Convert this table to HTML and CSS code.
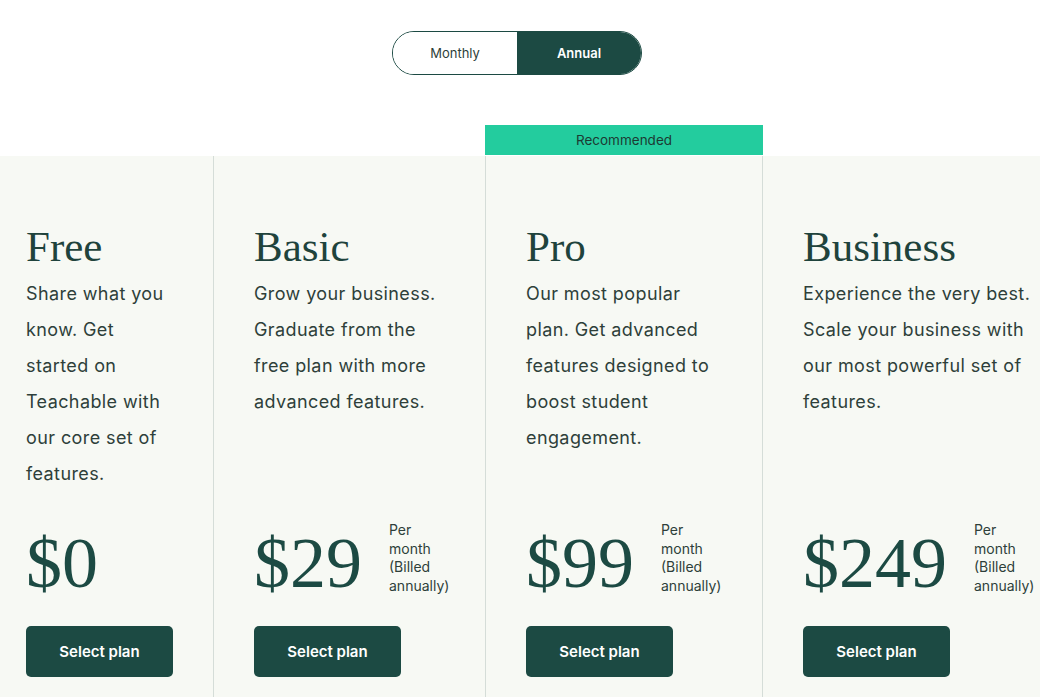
FILE: index.html
```html
<html lang="en">

<head>
    <title>Pricing</title>
    <link rel="stylesheet" href="styles.css">
</head>

<body>
    <div class="toggle">
        <button class="opt">Monthly</button>
        <button class="opt active">Annual</button>
    </div>

    <div class="plans">
        <div class="plan">
            <h2>Free</h2>
            <p class="desc">Share what you know. Get started on Teachable with our core set of features.</p>
            <div class="price">
                <span class="amount">$0</span>
            </div>
            <button class="select">Select plan</button>
        </div>
        <div class="plan">
            <h2>Basic</h2>
            <p class="desc">Grow your business. Graduate from the free plan with more advanced features.</p>
            <div class="price">
                <span class="amount">$29</span>
                <span class="per">Per month (Billed annually)</span>
            </div>
            <button class="select">Select plan</button>
        </div>
        <div class="plan featured">
            <div class="badge">Recommended</div>
            <h2>Pro</h2>
            <p class="desc">Our most popular plan. Get advanced features designed to boost student engagement.</p>
            <div class="price">
                <span class="amount">$99</span>
                <span class="per">Per month (Billed annually)</span>
            </div>
            <button class="select">Select plan</button>
        </div>
        <div class="plan">
            <h2>Business</h2>
            <p class="desc">Experience the very best. Scale your business with our most powerful set of features.</p>
            <div class="price">
                <span class="amount">$249</span>
                <span class="per">Per month (Billed annually)</span>
            </div>
            <button class="select">Select plan</button>
        </div>
    </div>
</body>

</html>
```

FILE: styles.css
```css
body {
    margin: 0;
    background: white;
    font-family: Inter, "Noto Sans", sans-serif;
    color: #2e3f3a;
    overflow: hidden;
}

.toggle {
    display: flex;
    width: 250px;
    height: 44px;
    margin: 31px 0 0 392px;
    border: 1px solid #1c4a43;
    border-radius: 23px;
    overflow: hidden;
    box-sizing: border-box;
}

.opt {
    flex: 1;
    border: none;
    background: white;
    font-family: inherit;
    font-size: 13px;
    color: #2e3f3a;
}

.opt.active {
    background: #1c4a43;
    color: white;
    font-weight: 600;
}

.plans {
    display: flex;
    margin: 81px 0 0 -15px;
    width: 1100px;
}

.plan {
    display: flex;
    flex-direction: column;
    align-items: flex-start;
    padding: 67px 41px 20px 40px;
    background: #f7f9f4;
    border-right: 1px solid #d5ddd8;
    box-sizing: border-box;
}

.plan:nth-child(1) { width: 229px; padding-left: 41px; }
.plan:nth-child(2) { width: 272px; }
.plan:nth-child(3) { width: 277px; }
.plan:nth-child(4) { width: 320px; }

.featured {
    position: relative;
}

.badge {
    position: absolute;
    top: -31px;
    left: -1px;
    right: -1px;
    height: 30px;
    line-height: 30px;
    background: #23cc9e;
    color: #1d3a33;
    font-size: 13.5px;
    text-align: center;
}

h2 {
    margin: 0;
    font-family: "Liberation Serif", serif;
    font-weight: normal;
    font-size: 43px;
    line-height: 48px;
    color: #1f433c;
}

.desc {
    margin: 5px 0 0;
    min-height: 216px;
    font-size: 18px;
    letter-spacing: 0.4px;
    line-height: 36px;
}

.price {
    display: flex;
    align-items: flex-start;
    gap: 27px;
    margin-top: 35px;
}

.amount {
    font-family: "Liberation Serif", serif;
    font-size: 72px;
    line-height: 72px;
    color: #1c4a43;
}

.per {
    width: 60px;
    font-size: 14px;
    line-height: 18.5px;
    margin-top: -6px;
}

.select {
    margin-top: 27px;
    width: 147px;
    height: 51px;
    border: none;
    border-radius: 5px;
    background: #1c4a43;
    color: white;
    font-family: inherit;
    font-size: 15px;
    font-weight: 600;
}
```
